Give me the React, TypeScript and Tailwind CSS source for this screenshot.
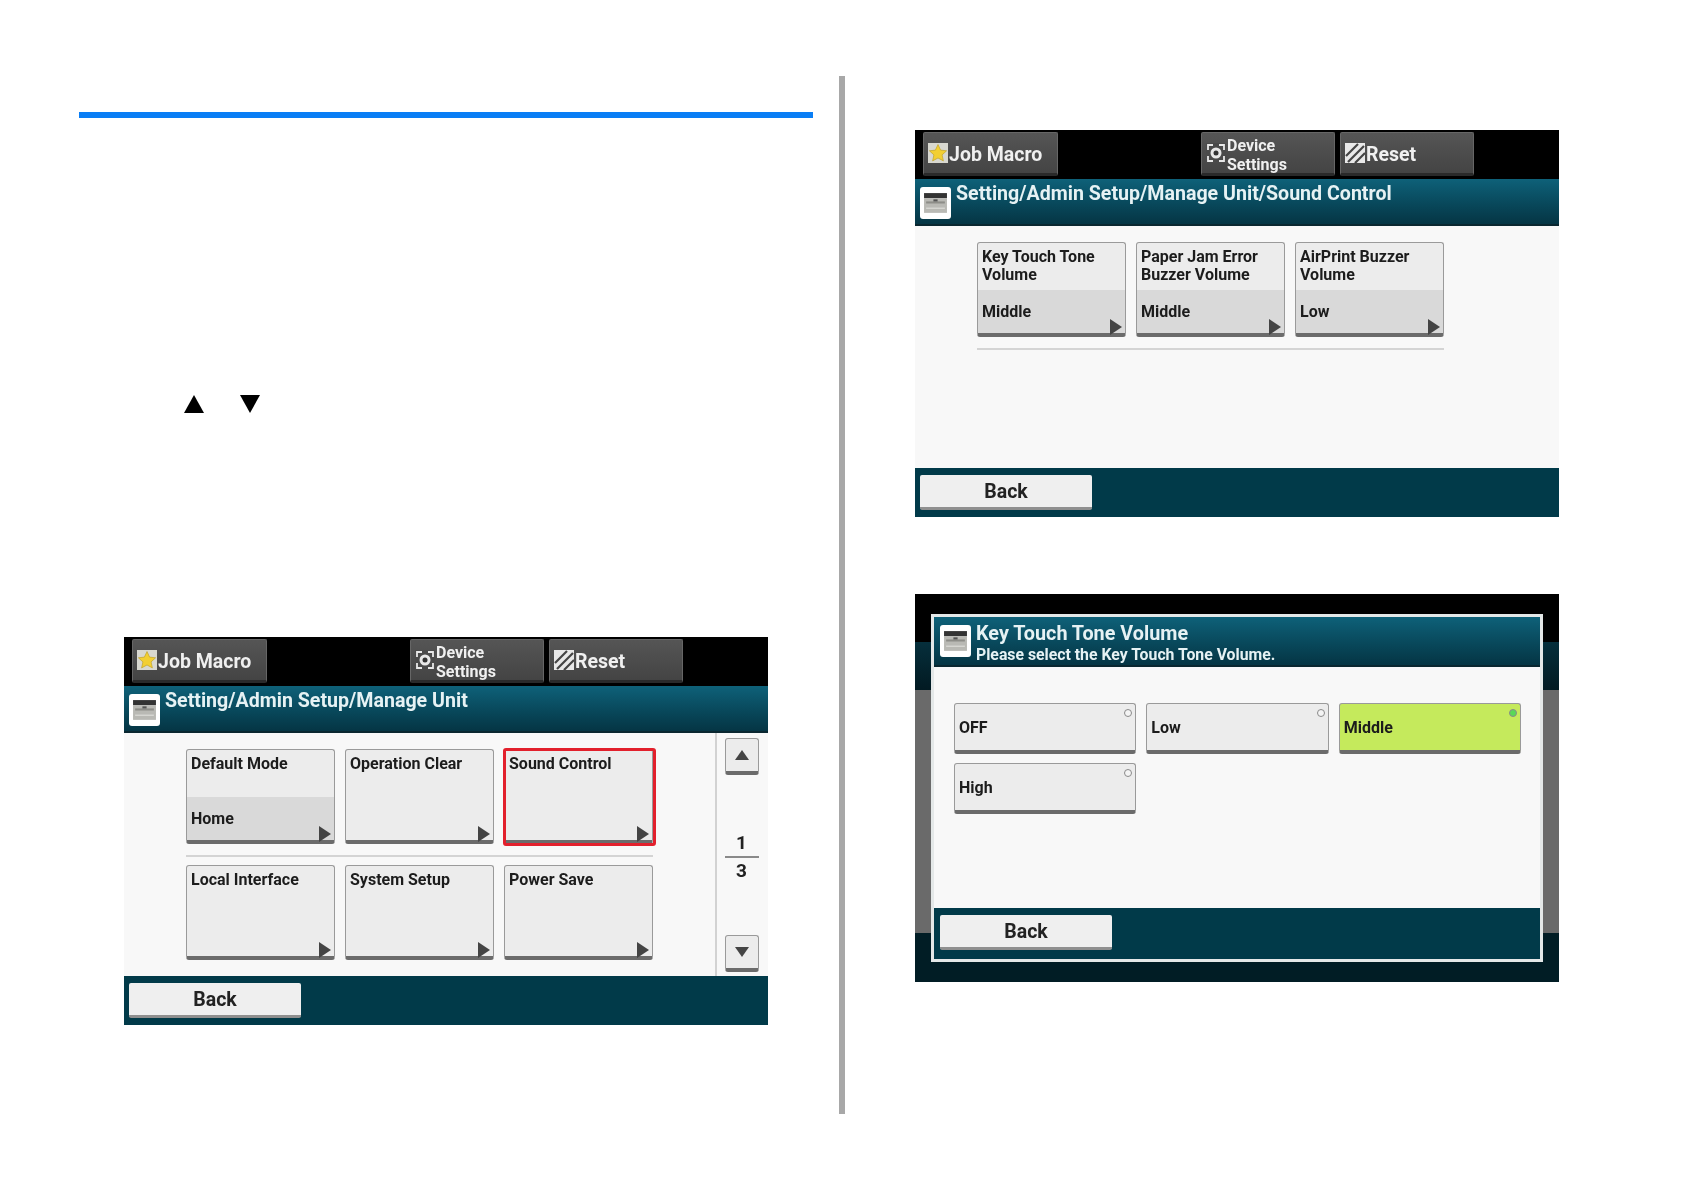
const uiFont = "font-['Roboto','Liberation_Sans',Arial,sans-serif]";

function StarIcon() {
  return (
    <svg viewBox="0 0 20 20" className="h-[20px] w-[20px] shrink-0">
      <rect width="20" height="20" fill="#d8d8d0" />
      <path d="M10 1.5l2.6 5.6 6 .7-4.5 4.1 1.3 6L10 15l-5.4 2.9 1.3-6L1.400 7.800l6-.7z" fill="#f2cf33" stroke="#b89a20" strokeWidth="0.6" />
    </svg>
  );
}

function GearIcon() {
  return (
    <svg viewBox="0 0 20 20" className="h-[20px] w-[20px] shrink-0">
      <rect width="20" height="20" fill="#4a4a4a" />
      <path d="M2 7V2h5M13 2h5v5M18 13v5h-5M7 18H2v-5" fill="none" stroke="#e8e8e8" strokeWidth="1.800" />
      <circle cx="10" cy="10" r="5.500" fill="#e8e8e8" />
      <circle cx="10" cy="10" r="2.500" fill="#333" />
    </svg>
  );
}

function ResetIcon() {
  return (
    <svg viewBox="0 0 20 20" className="h-[20px] w-[20px] shrink-0">
      <rect width="20" height="20" fill="#e8e8e8" />
      <path d="M1 13L13 1M3 19L19 3M10 20L20 10" stroke="#444" strokeWidth="2.200" />
    </svg>
  );
}

function PrinterIcon() {
  return (
    <div className="flex h-[32px] w-[31px] shrink-0 items-center justify-center rounded-[3px] bg-white">
      <svg viewBox="0 0 24 24" className="h-[25px] w-[25px]">
        <rect x="1" y="2" width="22" height="5" fill="#333" />
        <rect x="1" y="7" width="22" height="14" fill="#b9b9b4" />
        <rect x="3" y="10" width="18" height="2" fill="#8d8d88" />
        <rect x="3" y="16" width="18" height="1" fill="#e2e2de" />
        <rect x="10" y="8" width="4" height="2" fill="#555" />
      </svg>
    </div>
  );
}

function TopButton({ icon, children, className = "" }: { icon: React.ReactNode; children: React.ReactNode; className?: string }) {
  return (
    <div className={`flex h-[44px] items-center gap-[1px] rounded-[2px] border border-[#666] border-b-[3px] border-b-[#2a2a2a] bg-gradient-to-b from-[#555] to-[#444] pl-[4px] font-bold text-[#f0f0f0] ${className}`}>
      {icon}
      {children}
    </div>
  );
}

function TopBar() {
  return (
    <div className="flex h-[49px] items-start bg-black pl-[8px] pt-[2px]">
      <TopButton icon={<StarIcon />} className="w-[135px] text-[19.500px]">
        <span className="mt-[3px]">Job Macro</span>
      </TopButton>
      <TopButton icon={<GearIcon />} className="ml-[143px] w-[134px] text-[16px] leading-[19px]">
        <span className="mt-[3px]">Device<br />Settings</span>
      </TopButton>
      <TopButton icon={<ResetIcon />} className="ml-[5px] w-[134px] text-[19.500px]">
        <span className="mt-[3px]">Reset</span>
      </TopButton>
    </div>
  );
}

function Header({ title }: { title: string }) {
  return (
    <div className="flex h-[47px] items-start gap-[5px] border-b-2 border-b-[#0a2730] bg-gradient-to-b from-[#0e6179] to-[#053544] pl-[5px] pt-[8px]">
      <PrinterIcon />
      <span className="-mt-[5px] text-[19.600px] font-bold leading-[24px] text-[#e6f2f4]">{title}</span>
    </div>
  );
}

function Footer() {
  return (
    <div className="h-[49px] bg-[#013a49] pl-[5px] pt-[7px]">
      <BackButton />
    </div>
  );
}

function BackButton() {
  return (
    <div className="flex h-[35px] w-[172px] items-center justify-center rounded-[2px] border-b-[3px] border-b-[#8f8f8f] bg-[#efefef] pt-[2px] text-[19.500px] font-bold text-[#222]">
      Back
    </div>
  );
}

function Tile({ title, value, selected = false }: { title: string; value?: string; selected?: boolean }) {
  return (
    <div className="relative flex h-[95px] flex-col rounded-[3px] border border-[#9a9a9a] border-b-[4px] border-b-[#6b6b6b] bg-[#ececec] text-[16px] font-bold leading-[18px] text-[#1c1c1c]">
      <div className="h-[47px] whitespace-pre-line pl-[4px] pt-[5px]">{title}</div>
      {value && <div className="flex-1 bg-[#d9d9d9] pl-[4px] pt-[13px]">{value}</div>}
      <div className="absolute -bottom-[2px] right-[3px] h-0 w-0 border-y-[8px] border-l-[12px] border-y-transparent border-l-[#444]" />
      {selected && <div className="absolute -bottom-[6px] -left-[2px] -right-[4px] -top-[2px] rounded-[3px] border-[3px] border-[#e2202c]" />}
    </div>
  );
}

function ScrollButton({ up }: { up: boolean }) {
  return (
    <div className="flex h-[37px] w-[34px] items-center justify-center rounded-[3px] border border-[#9a9a9a] border-b-[4px] border-b-[#6b6b6b] bg-[#ececec]">
      <div className={`h-0 w-0 border-x-[7px] border-x-transparent ${up ? "border-b-[10px] border-b-[#444]" : "border-t-[10px] border-t-[#444]"}`} />
    </div>
  );
}

function ManageUnitScreen() {
  return (
    <div className={`h-[388px] w-[644px] blur-[0.4px] ${uiFont}`}>
      <TopBar />
      <Header title="Setting/Admin Setup/Manage Unit" />
      <div className="flex h-[243px] bg-[#f8f8f8]">
        <div className="w-[591px] pl-[62px] pt-[16px]">
          <div className="grid w-[467px] grid-cols-3 gap-x-[10px]">
            <Tile title="Default Mode" value="Home" />
            <Tile title="Operation Clear" />
            <Tile title="Sound Control" selected />
          </div>
          <div className="mt-[11px] h-[2px] w-[467px] bg-[#d4d4d4]" />
          <div className="mt-[8px] grid w-[467px] grid-cols-3 gap-x-[10px]">
            <Tile title="Local Interface" />
            <Tile title="System Setup" />
            <Tile title="Power Save" />
          </div>
        </div>
        <div className="flex w-[53px] flex-col items-center justify-between border-l-2 border-l-[#d2d2d2] pb-[4px] pr-[2px] pt-[5px]">
          <ScrollButton up />
          <div className="mt-[4px] flex w-[34px] flex-col items-center text-[19px] font-bold leading-[22px] text-[#222]">
            <span>1</span>
            <div className="my-[2px] h-[2px] w-full bg-[#8a8a8a]" />
            <span>3</span>
          </div>
          <ScrollButton up={false} />
        </div>
      </div>
      <Footer />
    </div>
  );
}

function SoundControlScreen() {
  return (
    <div className={`h-[387px] w-[644px] blur-[0.4px] ${uiFont}`}>
      <TopBar />
      <Header title="Setting/Admin Setup/Manage Unit/Sound Control" />
      <div className="h-[242px] bg-[#f8f8f8] pl-[62px] pt-[16px]">
        <div className="grid w-[467px] grid-cols-3 gap-x-[10px]">
          <Tile title={"Key Touch Tone\nVolume"} value="Middle" />
          <Tile title={"Paper Jam Error\nBuzzer Volume"} value="Middle" />
          <Tile title={"AirPrint Buzzer\nVolume"} value="Low" />
        </div>
        <div className="mt-[11px] h-[2px] w-[467px] bg-[#d4d4d4]" />
      </div>
      <Footer />
    </div>
  );
}

function OptionButton({ label, active = false }: { label: string; active?: boolean }) {
  return (
    <div className={`relative flex h-[51px] items-center rounded-[3px] border border-[#9a9a9a] border-b-[4px] border-b-[#6b6b6b] pl-[4px] text-[16px] font-bold text-[#1c1c1c] ${active ? "bg-[#c5ea5c]" : "bg-[#ececec]"}`}>
      <span className="mt-[1px]">{label}</span>
      <div className={`absolute right-[3px] top-[5px] h-[8px] w-[8px] rounded-full border border-[#8a8a8a] ${active ? "bg-[#58d858]" : "bg-[#f4f4f4]"}`} />
    </div>
  );
}

function VolumeDialogScreen() {
  return (
    <div className={`relative h-[388px] w-[644px] blur-[0.4px] ${uiFont}`}>
      <div className="h-[48px] bg-black" />
      <div className="h-[48px] bg-gradient-to-b from-[#062f3c] to-[#021a22]" />
      <div className="h-[243px] bg-[#6a6a6a]" />
      <div className="h-[49px] bg-[#011d25]" />
      <div className="absolute left-[16px] top-[20px] flex h-[348px] w-[612px] flex-col border-[3px] border-[#e4e8e8]">
        <div className="flex h-[50px] items-center gap-[5px] border-b-2 border-b-[#0a2730] bg-gradient-to-b from-[#0e6179] to-[#053544] pl-[6px]">
          <PrinterIcon />
          <div className="mt-[3px] text-[#e6f2f4]">
            <div className="text-[19.800px] font-bold leading-[24px]">Key Touch Tone Volume</div>
            <div className="text-[15.800px] font-bold leading-[18px]">Please select the Key Touch Tone Volume.</div>
          </div>
        </div>
        <div className="h-[241px] bg-[#f8f8f8] pl-[20px] pt-[36px]">
          <div className="grid w-[567px] grid-cols-3 gap-x-[10px] gap-y-[9px]">
            <OptionButton label="OFF" />
            <OptionButton label="Low" />
            <OptionButton label="Middle" active />
            <OptionButton label="High" />
          </div>
        </div>
        <div className="flex-1 bg-[#013a49] pl-[6px] pt-[7px]">
          <BackButton />
        </div>
      </div>
    </div>
  );
}

export default function App() {
  return (
    <div className="flex h-[1190px] w-[1684px] bg-white">
      <div className="w-[839px] pl-[79px] pt-[112px]">
        <div className="h-[6px] w-[734px] bg-[#0a7ef5]" />
        <div className="ml-[105px] mt-[277px] flex gap-[36px]">
          <div className="h-0 w-0 border-x-[10px] border-b-[18px] border-x-transparent border-b-black" />
          <div className="h-0 w-0 border-x-[10px] border-t-[18px] border-x-transparent border-t-black" />
        </div>
        <div className="ml-[45px] mt-[224px]">
          <ManageUnitScreen />
        </div>
      </div>
      <div className="mt-[76px] h-[1038px] w-[6px] bg-[#a8a8a8]" />
      <div className="flex flex-col gap-[77px] pl-[70px] pt-[130px]">
        <SoundControlScreen />
        <VolumeDialogScreen />
      </div>
    </div>
  );
}
